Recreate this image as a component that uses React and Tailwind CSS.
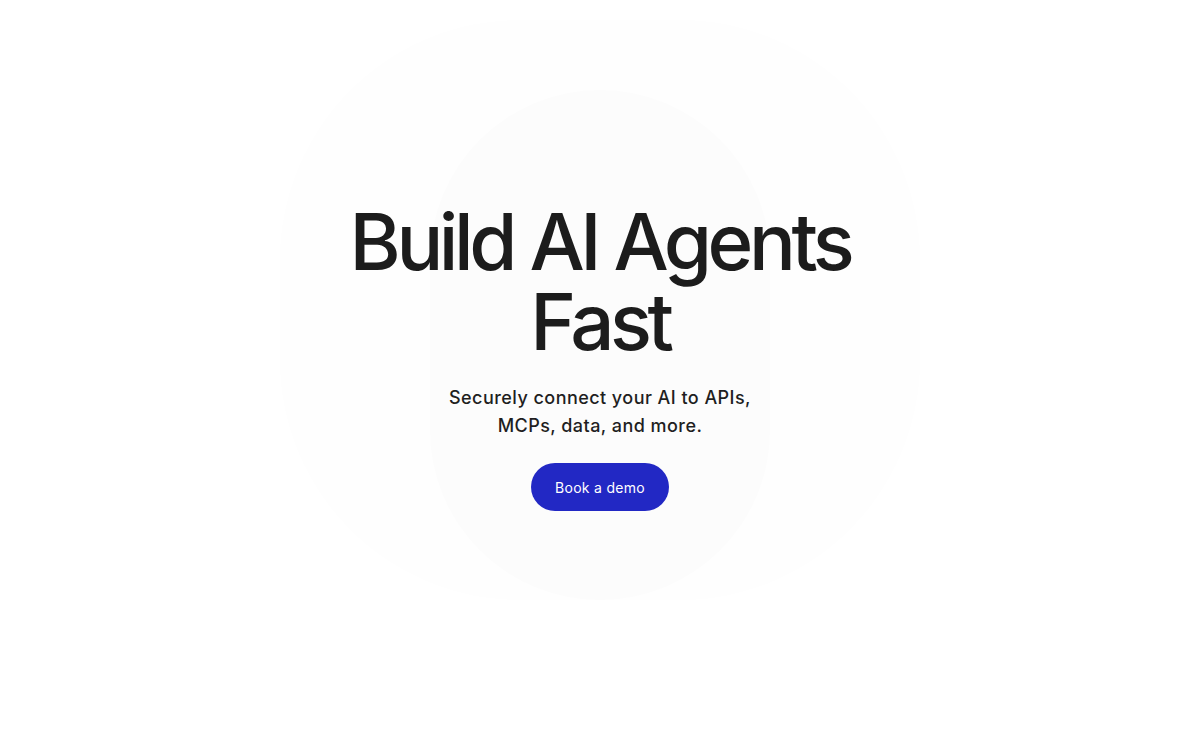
export default function App() {
  return (
    <div className="relative min-h-screen w-full overflow-hidden bg-white font-['Inter',sans-serif]">
      {/* faint backdrop shapes */}
      <div className="pointer-events-none absolute left-[280px] top-[20px] h-[580px] w-[640px] rounded-[240px] bg-[#fefefe]" />
      <div className="pointer-events-none absolute left-[430px] top-[90px] h-[510px] w-[340px] rounded-[170px] bg-[#fcfcfc]" />

      <main className="relative flex flex-col items-center pt-[202px] text-center">
        <h1 className="text-[78px] font-medium leading-[80px] tracking-[-0.057em] text-[#1c1c1c]">
          Build AI Agents
          <br />
          Fast
        </h1>
        <p className="mt-[22px] text-[18px] font-medium leading-[28px] tracking-[0.025em] text-[#1f1f1f]">
          Securely connect your AI to APIs,
          <br />
          MCPs, data, and more.
        </p>
        <button className="mt-[23px] h-[48px] w-[138px] rounded-full bg-[#2228c4] text-[14px] tracking-[0.02em] text-white">
          Book a demo
        </button>
      </main>
    </div>
  );
}
